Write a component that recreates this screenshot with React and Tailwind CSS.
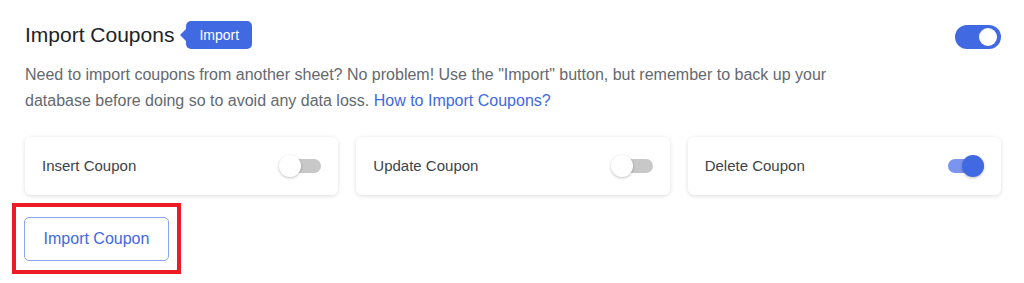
import { useState } from "react";

const Toggle = ({ on, onChange }) => (
  <button
    type="button"
    onClick={onChange}
    className="relative h-[22px] w-[42px] shrink-0"
  >
    <span
      className={`absolute left-[6px] right-0 top-[4px] h-[14px] rounded-full ${
        on ? "bg-[#7b95ee]" : "bg-[#c8c8c8]"
      }`}
    />
    <span
      className={`absolute top-0 h-[22px] w-[22px] rounded-full shadow-[0_1px_3px_rgba(0,0,0,0.25)] ${
        on ? "right-0 bg-[#4169e1]" : "left-0 bg-white"
      }`}
    />
  </button>
);

const OptionCard = ({ label, on, onChange }) => (
  <div className="flex h-[58px] items-center justify-between rounded-md bg-white pl-[17px] pr-[17px] shadow-[0_1px_4px_rgba(0,0,0,0.14)]">
    <span className="text-[15px] text-[#3c434a]">{label}</span>
    <Toggle on={on} onChange={onChange} />
  </div>
);

export default function App() {
  const [enabled, setEnabled] = useState(true);
  const [opts, setOpts] = useState({ insert: false, update: false, del: true });
  const flip = (k) => setOpts((o) => ({ ...o, [k]: !o[k] }));

  return (
    <div className="min-h-[283px] bg-white pl-[25px] pr-[23px] pt-[20px] font-['Liberation_Sans',Arial,sans-serif]">
      {/* Header */}
      <div className="flex items-center justify-between">
        <div className="flex items-center">
          <h2 className="text-[21px] leading-[30px] text-[#1d2327]">Import Coupons</h2>
          <span className="relative ml-[12px] flex h-[28px] items-center rounded-[5px] bg-[#4169e1] px-[13px] text-[14px] text-white">
            <span className="absolute left-[-6px] top-1/2 h-0 w-0 -translate-y-1/2 border-y-[6px] border-r-[6px] border-y-transparent border-r-[#4169e1]" />
            Import
          </span>
        </div>
        <button
          type="button"
          onClick={() => setEnabled(!enabled)}
          className={`relative mt-[4px] h-[24px] w-[46px] rounded-full ${
            enabled ? "bg-[#4169e1]" : "bg-[#c8c8c8]"
          }`}
        >
          <span
            className={`absolute top-[3px] h-[18px] w-[18px] rounded-full bg-white ${
              enabled ? "right-[4px]" : "left-[4px]"
            }`}
          />
        </button>
      </div>

      {/* Description */}
      <p className="mt-[12px] max-w-[840px] text-[16px] leading-[26px] text-[#646970]">
        Need to import coupons from another sheet? No problem! Use the "Import" button, but remember to back up your database before doing so to avoid any data loss.{" "}
        <a href="#" className="text-[#4169e1]">How to Import Coupons?</a>
      </p>

      {/* Options */}
      <div className="mt-[23px] grid grid-cols-3 gap-[18px]">
        <OptionCard label="Insert Coupon" on={opts.insert} onChange={() => flip("insert")} />
        <OptionCard label="Update Coupon" on={opts.update} onChange={() => flip("update")} />
        <OptionCard label="Delete Coupon" on={opts.del} onChange={() => flip("del")} />
      </div>

      {/* Action */}
      <div className="-ml-[13px] mt-[8px] inline-block border-4 border-[#ed1c24] pb-[9px] pl-[8px] pr-[8px] pt-[10px]">
        <button
          type="button"
          className="h-[44px] w-[145px] rounded-[5px] border border-[#8aa4f2] bg-white text-[16px] text-[#4169e1]"
        >
          Import Coupon
        </button>
      </div>
    </div>
  );
}
